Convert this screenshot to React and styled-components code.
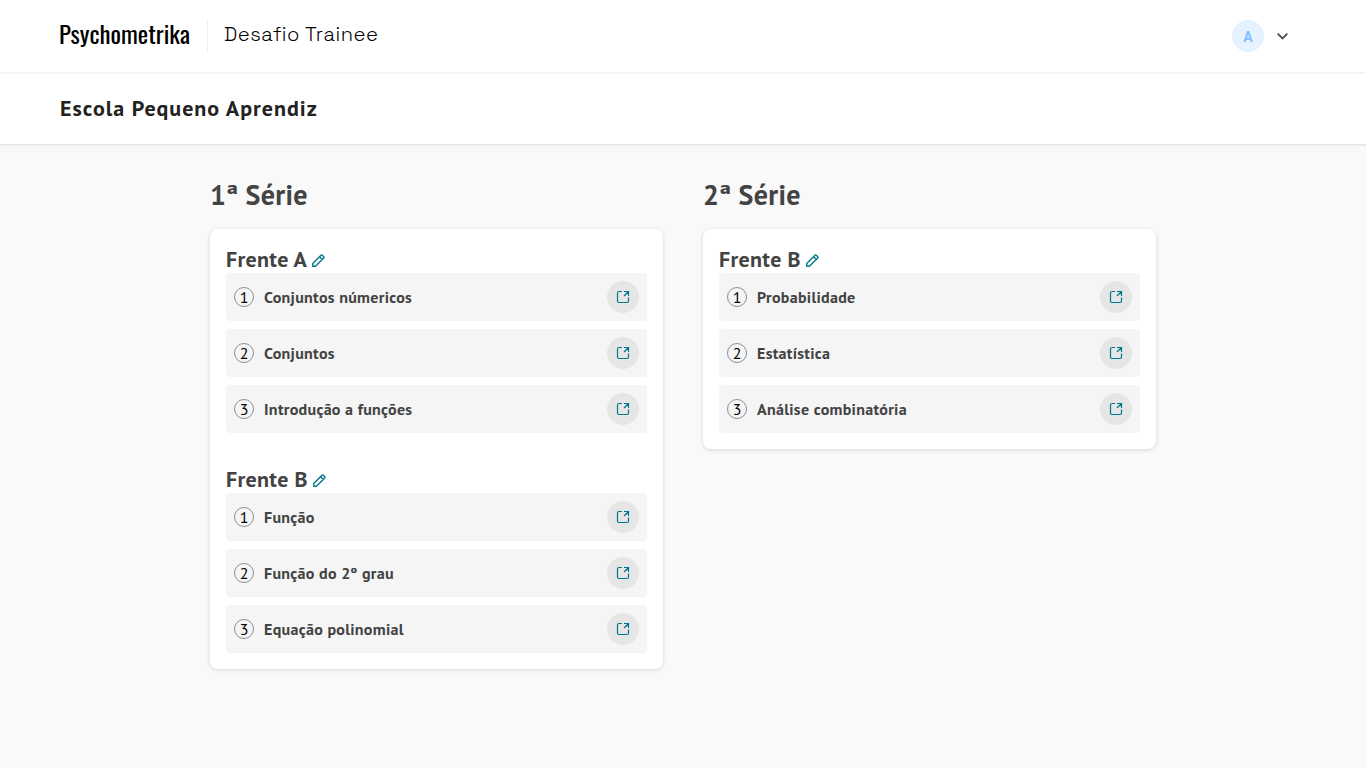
import React from "react";
import styled, { createGlobalStyle } from "styled-components";

const GlobalStyle = createGlobalStyle`
  * { box-sizing: border-box; }
  body { margin: 0; background: #f9f9f9; color: #434343; font-family: "PT Sans", "Noto Sans", sans-serif; }
  h1, h2, h3, p, ul { margin: 0; padding: 0; }
  button { border: 0; padding: 0; background: none; font: inherit; }
`;

const Page = styled.div`min-height: 768px;`;

const Header = styled.header`
  position: relative;
  height: 72px;
  padding: 0 75px 0 59px;
  display: flex;
  align-items: center;
  background: #fff;
  box-shadow: 0 1px 2px rgba(0, 0, 0, 0.08);
`;

const Logo = styled.svg`
  display: block;
  width: 131px;
  height: 36px;
  overflow: visible;
  font: 400 24px Oswald, Roboto, sans-serif;
`;

const Divider = styled.span`
  width: 1px;
  height: 32px;
  margin: 0 16px 0 17px;
  background: #f0f0f0;
`;

const Product = styled.span`
  color: #000;
  font: 300 20px/24px "Space Grotesk", "DejaVu Sans Light", "DejaVu Sans", sans-serif;
  letter-spacing: 0.54px;
  padding-bottom: 4px;
`;

const Account = styled.button`
  margin-left: auto;
  display: flex;
  align-items: center;
  gap: 11px;
`;

const Avatar = styled.span`
  width: 32px;
  height: 32px;
  border-radius: 50%;
  background: #e6f2ff;
  color: #80c0ff;
  font: 700 14px/34px Roboto, sans-serif;
  text-align: center;
`;

const TitleBar = styled.div`
  height: 73px;
  padding: 0 60px;
  display: flex;
  align-items: center;
  background: #fff;
  border-bottom: 1px solid #e4e4e4;
  box-shadow: 0 1px 2px rgba(0, 0, 0, 0.05);
`;

const School = styled.h1`
  color: #222;
  font-size: 22px;
  line-height: 28px;
  letter-spacing: 1px;
`;

const Columns = styled.main`
  width: 946px;
  margin: 0 auto;
  padding-top: 32px;
  display: grid;
  grid-template-columns: 1fr 1fr;
  gap: 40px;
  align-items: start;
  letter-spacing: 0.3px;
`;

const GradeTitle = styled.h2`
  margin-bottom: 16px;
  font-size: 28px;
  line-height: 36px;
`;

const Card = styled.section`
  padding: 16px;
  display: grid;
  gap: 32px;
  border-radius: 8px;
  background: #fff;
  box-shadow: 0 1px 4px rgba(0, 0, 0, 0.14);
`;

const FrontHead = styled.div`
  height: 28px;
  display: flex;
  align-items: center;
  gap: 5px;
`;

const FrontTitle = styled.h3`
  font-size: 22px;
  line-height: 28px;
`;

const EditButton = styled.button`
  display: flex;
  color: #00778b;
  padding-top: 3px;
`;

const List = styled.ul`
  display: grid;
  gap: 8px;
  list-style: none;
`;

const Item = styled.li`
  height: 48px;
  padding: 0 8px;
  display: flex;
  align-items: center;
  border-radius: 4px;
  background: #f5f5f5;
`;

const Order = styled.span`
  width: 20px;
  height: 20px;
  border: 1px solid #8c8f98;
  border-radius: 50%;
  color: #000;
  font-size: 16px;
  line-height: 19px;
  letter-spacing: 0;
  text-align: center;
`;

const Topic = styled.span`
  margin-left: 10px;
  font-size: 16px;
  line-height: 24px;
  font-weight: 700;
  white-space: nowrap;
`;

const OpenButton = styled.button`
  width: 32px;
  height: 32px;
  margin-left: auto;
  display: grid;
  place-items: center;
  border-radius: 50%;
  background: #e6e6e6;
  color: #00778b;
`;

const PencilIcon = () => (
  <svg width="13" height="13" viewBox="0 0 14 14" fill="none" stroke="currentColor" strokeWidth="1.5" strokeLinejoin="round">
    <path d="M.8 13.2V10.3L9.7 1.4Q10.4.7 11.1 1.4L12.6 2.9Q13.3 3.6 12.6 4.3L3.7 13.2ZM8.2 2.9L11.1 5.8" />
  </svg>
);

const OpenIcon = () => (
  <svg width="14" height="14" viewBox="0 0 14 14" fill="none" stroke="currentColor" strokeWidth="1.2">
    <path d="M6 1.5H3Q1.5 1.5 1.5 3V11Q1.5 12.5 3 12.5H11Q12.5 12.5 12.5 11V7.5M8 1.5H12.5V6M12 2L8 6" />
  </svg>
);

const ChevronIcon = () => (
  <svg width="16" height="16" viewBox="0 0 16 16" fill="none" stroke="#4d4d4d" strokeWidth="1.8">
    <path d="M2.7 5.6L7.5 10.4L12.3 5.6" />
  </svg>
);

const grades = [
  {
    name: "1ª Série",
    fronts: [
      { name: "Frente A", topics: ["Conjuntos númericos", "Conjuntos", "Introdução a funções"] },
      { name: "Frente B", topics: ["Função", "Função do 2º grau", "Equação polinomial"] },
    ],
  },
  {
    name: "2ª Série",
    fronts: [
      { name: "Frente B", topics: ["Probabilidade", "Estatística", "Análise combinatória"] },
    ],
  },
];

const Front = ({ front }) => (
  <div>
    <FrontHead>
      <FrontTitle>{front.name}</FrontTitle>
      <EditButton aria-label="Editar"><PencilIcon /></EditButton>
    </FrontHead>
    <List>
      {front.topics.map((topic, i) => (
        <Item key={topic}>
          <Order>{i + 1}</Order>
          <Topic>{topic}</Topic>
          <OpenButton aria-label="Abrir"><OpenIcon /></OpenButton>
        </Item>
      ))}
    </List>
  </div>
);

export default function App() {
  return (
    <Page>
      <GlobalStyle />
      <Header>
        <Logo>
          <text x="0" y="26" textLength="131" lengthAdjust="spacingAndGlyphs">Psychometrika</text>
        </Logo>
        <Divider />
        <Product>Desafio Trainee</Product>
        <Account aria-label="Conta">
          <Avatar>A</Avatar>
          <ChevronIcon />
        </Account>
      </Header>
      <TitleBar>
        <School>Escola Pequeno Aprendiz</School>
      </TitleBar>
      <Columns>
        {grades.map((grade) => (
          <div key={grade.name}>
            <GradeTitle>{grade.name}</GradeTitle>
            <Card>
              {grade.fronts.map((front) => <Front key={front.name} front={front} />)}
            </Card>
          </div>
        ))}
      </Columns>
    </Page>
  );
}
